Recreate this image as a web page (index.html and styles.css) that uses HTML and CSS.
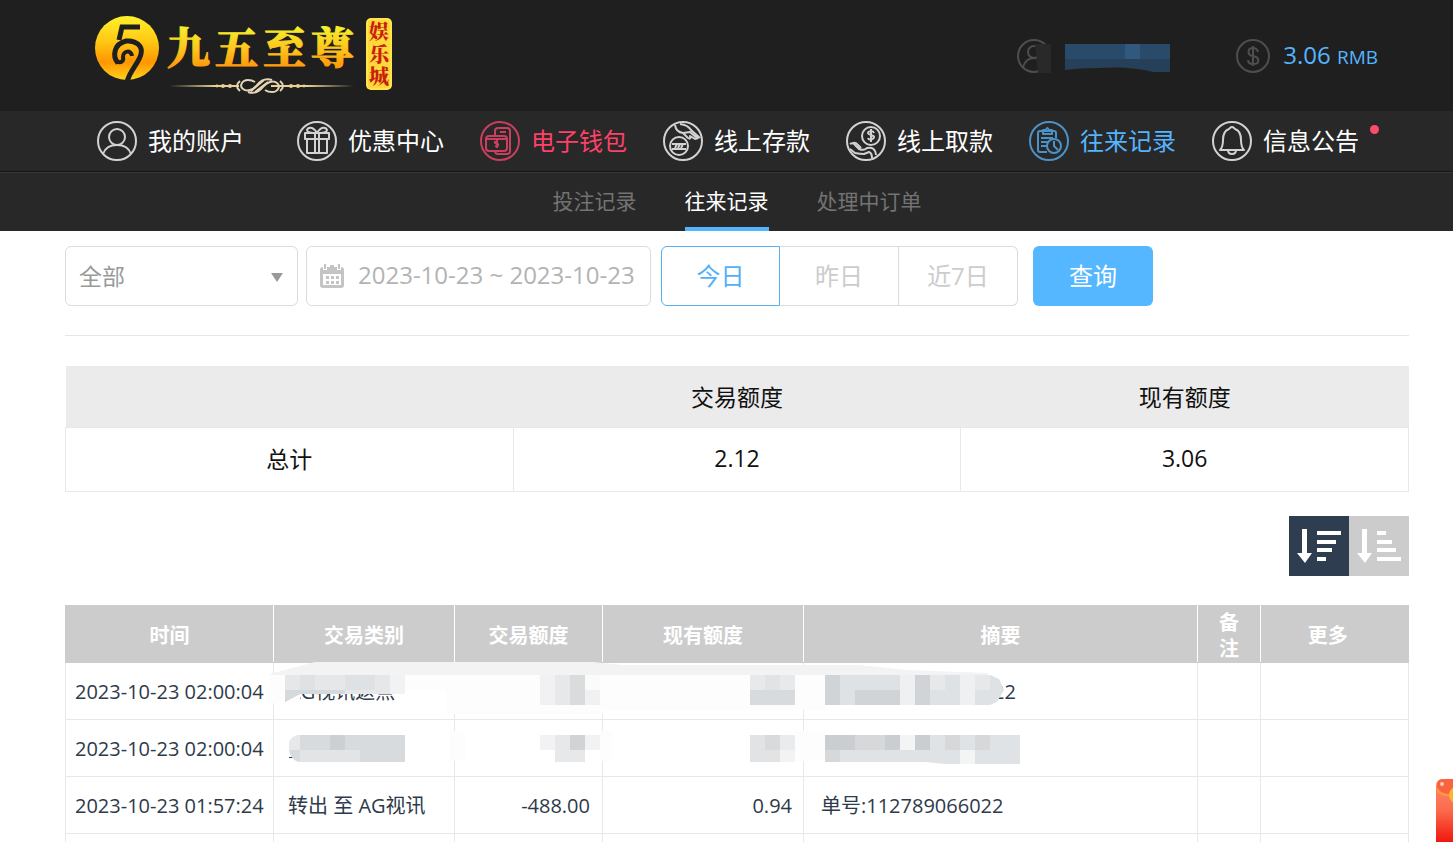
FILE: index.html
```html
<!DOCTYPE html>
<html lang="zh-CN">
<head>
<meta charset="utf-8">
<title>往来记录</title>
<link rel="stylesheet" href="styles.css">
</head>
<body>
<header class="top">
  <svg class="logo" viewBox="0 0 304 84" role="img" aria-label="九五至尊娱乐城">
    <defs>
      <linearGradient id="gold" x1="0" y1="0" x2="0" y2="1"><stop offset="0" stop-color="#fff22a"/><stop offset=".4" stop-color="#ffc814"/><stop offset=".72" stop-color="#ff9600"/><stop offset="1" stop-color="#ffd21e"/></linearGradient>
      <linearGradient id="goldText" gradientUnits="userSpaceOnUse" x1="0" y1="16" x2="0" y2="58"><stop offset="0" stop-color="#f4f02c"/><stop offset=".55" stop-color="#ffc21c"/><stop offset="1" stop-color="#ff9408"/></linearGradient>
      <linearGradient id="rule" gradientUnits="userSpaceOnUse" x1="76" y1="0" x2="261" y2="0"><stop offset="0" stop-color="#e8cf94" stop-opacity="0"/><stop offset=".25" stop-color="#e8cf94"/><stop offset=".75" stop-color="#e8cf94"/><stop offset="1" stop-color="#e8cf94" stop-opacity="0"/></linearGradient>
    </defs>
    <circle cx="34" cy="37" r="32" fill="url(#gold)"/>
    <g fill="none" stroke="#1f1f1f" stroke-width="5">
      <path d="M47 16H29L26 29"/>
      <path d="M25 52c-6-7-4-19 8-22 10-1 17 5 15 13-2 9-11 16-14 28"/>
      <path d="M23 50c5 3 8 0 7-4 0-6 8-8 9-1" stroke-width="4"/>
    </g>
    <g class="logo-name" fill="url(#goldText)" stroke="url(#goldText)" stroke-width="1"><text x="74 122 170 218" y="53">九五至尊</text></g>
    <path d="M76 74H146V76H76zM178 74H261V76H178z" fill="url(#rule)"/>
    <g fill="#e8cf94"><circle cx="130" cy="75" r="2"/><circle cx="137" cy="75" r="2"/><circle cx="205" cy="75" r="2"/><circle cx="198" cy="75" r="2"/><circle cx="124" cy="75" r="1.4"/><circle cx="211" cy="75" r="1.4"/></g>
    <g fill="none" stroke="#e4d6b4" stroke-width="2"><path d="M179 69c-6-2-11 0-15 5s-10 7-14 4-1-9 5-9q4 0 7 2"/><path d="M155 81c6 2 11 0 15-5s10-7 14-4 1 9-5 9q-4 0-7-2M158 80l13-11M162 81l13-10"/><path d="M147 70q-6 5 0 10M187 70q6 5 0 10"/></g>
    <rect x="273" y="7" width="26" height="72" rx="5" fill="#ffd83a"/><rect x="274" y="8" width="24" height="70" rx="4" fill="none" stroke="#fff05a"/>
    <g class="logo-tag" fill="#c81e10"><text x="276" y="28">娱</text><text x="276" y="51">乐</text><text x="276" y="73">城</text></g>
  </svg>
  <div class="account">
    <svg class="user-icon" viewBox="0 0 34 34" aria-hidden="true"><circle cx="17" cy="17" r="16"/><circle cx="17" cy="13" r="6"/><path d="M6 28q3-9 11-9t11 9"/><path class="smudge" d="M18 5h16v29H21z"/></svg>
    <svg class="user-name" viewBox="0 0 105 28" role="img" aria-label="用户名已隐藏"><path fill="#294a68" d="M0 0h105v15H0z"/><path fill="#31597d" d="M60 0h15v15H60z"/><path fill="#254058" d="M0 15h105v13H88q-22-6-55-4-18 0-33 2z"/></svg>
    <svg class="coin-icon" viewBox="0 0 34 34" aria-hidden="true"><circle cx="17" cy="17" r="16"/><path d="M17 7v20M22 13q-1-4-5-4c-6 0-6 7 0 8 7 1 7 8 0 8q-5 0-5-4"/></svg>
    <span class="balance">3.06 <small>RMB</small></span>
  </div>
</header>

<nav class="main-nav">
  <a class="nav-item first" href="#"><svg viewBox="0 0 40 40"><circle cx="20" cy="20" r="19"/><circle cx="20" cy="16" r="8"/><path d="M6 33q3-9 14-9t14 9"/></svg>我的账户</a>
  <a class="nav-item" href="#"><svg viewBox="0 0 40 40"><circle cx="20" cy="20" r="19"/><path d="M8 12h24v6H8zM10 18h20v14H10zM18 12v20M22 12v20M20 12c-4-7-9-6-10-3 0 2 4 3 10 3 6 0 10-1 10-3-1-3-6-4-10 3"/></svg>优惠中心</a>
  <a class="nav-item wallet" href="#"><svg viewBox="0 0 40 40"><circle cx="20" cy="20" r="19"/><path d="M15 15V10q0-3 3-3h9q3 0 3 3v20q0 3-3 3h-9q-3 0-3-3M20 11h6M9 15h15q3 0 3 3v9q0 3-3 3H9q-3 0-3-3v-9q0-3 3-3zM6 18h21M18 20q-4 0-3 2l3 1q1 3-3 2M17 19v8"/></svg>电子钱包</a>
  <a class="nav-item" href="#"><svg viewBox="0 0 40 40"><circle cx="20" cy="20" r="19"/><circle cx="16" cy="25" r="9"/><path d="M9 23h14M9 28h14M12 27l2-4M15 27l2-4M18 27l2-4"/><path d="M12 4q1 7 8 8l5 5q3 2 2-2l5 3q3 0 0-4l4 3M17 3q8 1 11 6l9 8M20 12l7-1 8 7"/></svg>线上存款</a>
  <a class="nav-item" href="#"><svg viewBox="0 0 40 40"><circle cx="20" cy="20" r="19"/><circle cx="25" cy="15" r="9"/><path d="M28 12c-1-3-6-2-6 0s6 2 6 4-5 4-6 1M25 8v13"/><path d="M4 23q3-2 5 1l4 4q5 2 8-1 8-2 9 7M7 22q3-1 5 2l3 3M4 28l5 4q5 1 9 1l5-2q3 1 3 6"/></svg>线上取款</a>
  <a class="nav-item active" href="#"><svg viewBox="0 0 40 40"><circle cx="20" cy="20" r="19"/><path d="M18 31H11q-2 0-2-2V12q0-2 2-2h14q2 0 2 2v5M14 13V9h3q1-4 3 0h3v4zM12 17h12M12 21h7M12 25h6"/><circle cx="25" cy="25" r="7"/><path d="M25 20v5l4 4"/></svg>往来记录</a>
  <a class="nav-item" href="#"><svg viewBox="0 0 40 40"><circle cx="20" cy="20" r="19"/><path d="M8 29q3-3 3-10c0-7 3-10 6-11q3-4 6 0c3 1 6 4 6 11q0 7 3 10zM16 29q0 4 4 4t4-4"/></svg>信息公告<i class="dot"></i></a>
</nav>

<nav class="sub-nav">
  <a href="#">投注记录</a>
  <a class="current" href="#">往来记录</a>
  <a href="#">处理中订单</a>
</nav>

<main class="content">
  <form class="filters">
    <div class="select-box">
      <select aria-label="类别"><option>全部</option></select>
      <svg viewBox="0 0 12 9" aria-hidden="true"><path d="M0 0h12L6 9z"/></svg>
    </div>
    <label class="date-box">
      <svg viewBox="0 0 24 24" aria-hidden="true"><path fill="#c4c4c4" d="M3 3h18q3 0 3 3v15q0 3-3 3H3q-3 0-3-3V6q0-3 3-3z"/><path fill="#fff" d="M3 10h18v11H3zM3 0h4v6H3zM17 0h4v6h-4z"/><path fill="#c4c4c4" d="M4 0h2v5H4zM18 0h2v5h-2zM10 1h4v3h-4zM6 12h3v3H6zM11 12h3v3h-3zM16 12h3v3h-3zM6 17h3v3H6zM11 17h3v3h-3zM16 17h3v3h-3z"/></svg>
      <input type="text" aria-label="日期" value="2023-10-23 ~ 2023-10-23">
    </label>
    <div class="range">
      <button type="button" class="on">今日</button><button type="button">昨日</button><button type="button">近7日</button>
    </div>
    <button type="submit" class="query">查询</button>
  </form>

  <table class="summary">
    <thead><tr><th></th><th>交易额度</th><th>现有额度</th></tr></thead>
    <tbody><tr><td>总计</td><td>2.12</td><td>3.06</td></tr></tbody>
  </table>

  <div class="sort">
    <button type="button" class="desc" aria-label="降序"><svg viewBox="0 0 60 60"><path d="M13 13h5v24h5l-7 10-8-10h5zM28 15h24v4H28zM28 24h19v4H28zM28 32h15v4H28zM28 41h9v4h-9z"/></svg></button>
    <button type="button" class="asc" aria-label="升序"><svg viewBox="0 0 60 60"><path d="M13 13h5v24h5l-7 10-8-10h5zM28 15h9v4h-9zM28 24h15v4H28zM28 32h19v4H28zM28 41h24v4H28z"/></svg></button>
  </div>

  <div class="records-wrap">
    <table class="records">
      <colgroup><col class="c-time"><col class="c-type"><col class="c-amount"><col class="c-left"><col class="c-note"><col class="c-remark"><col class="c-more"></colgroup>
      <thead><tr><th>时间</th><th>交易类别</th><th>交易额度</th><th>现有额度</th><th>摘要</th><th>备注</th><th>更多</th></tr></thead>
      <tbody>
        <tr><td>2023-10-23 02:00:04</td><td>AG视讯返点</td><td></td><td></td><td><span class="hidden-no"></span>22</td><td></td><td></td></tr>
        <tr><td>2023-10-23 02:00:04</td><td></td><td></td><td></td><td></td><td></td><td></td></tr>
        <tr><td>2023-10-23 01:57:24</td><td>转出 至 AG视讯</td><td>-488.00</td><td>0.94</td><td>单号:112789066022</td><td></td><td></td></tr>
        <tr><td></td><td></td><td></td><td></td><td></td><td></td><td></td></tr>
      </tbody>
    </table>
    <svg class="mask" viewBox="265 660 760 106" aria-hidden="true">
      <path fill="#fdfdfd" d="M270 675h725v15H405v4H300v8h-15l-15 2zM446 688h157v26H446zM603 675h222v35H603zM450 731h15v30h-15zM600 731h12v30h-12zM795 731h30v30h-30z"/>
      <path fill="#f3f3f3" d="M270 674l45-12h278l30 3h235l50 5 80 3v2H270z"/>
      <path fill="#e6e7e9" d="M285 675h105v19h-90l-8 4-7 4z"/><path fill="#f1f2f3" d="M390 675h15v19h-15z"/>
      <path fill="#d6d9db" d="M285 690h60v4h-45l-15 8z"/><path fill="#dfe2e4" d="M300 675h15v15h-15zM345 675h30v15h-30z"/>
      <path fill="#f1f1f3" d="M540 675h60v30h-60z"/><path fill="#e7e8ea" d="M555 675h15v30h-15z"/><path fill="#d9dbdd" d="M570 675h15v30h-15z"/><path fill="#fbfbfb" d="M585 675h15v15h-15z"/>
      <path fill="#e8e9eb" d="M750 675h45v15h-45z"/><path fill="#d8dbde" d="M750 690h45v15h-45z"/><path fill="#e1e3e5" d="M765 675h15v15h-15z"/>
      <path fill="#dfe2e4" d="M825 675h165l9 4 5 11-7 12-7 3H825z"/><path fill="#d1d4d6" d="M825 675h15v30h-15zM855 690h45v15h-45zM915 675h15v30h-15z"/><path fill="#eff0f1" d="M900 675h15v30h-15zM960 675h15v30h-15z"/><path fill="#e7e8ea" d="M930 675h15v15h-15zM975 675h15v15h-15z"/>
      <path fill="#33404f" d="M289 757h5v1h-5z"/>
      <path fill="#d8dbde" d="M298 735h107v27H300q-7-1-10-8-4-12 8-19z"/><path fill="#cccfd3" d="M330 735h15v15h-15z"/><path fill="#e2e4e6" d="M300 750h60v12h-60z"/><path fill="#e7e8ea" d="M289 742q3-7 11-7v15h-11z"/>
      <path fill="#f2f2f5" d="M540 735h60v15h-60z"/><path fill="#e7e8ea" d="M555 735h30v27h-30z"/><path fill="#d1d3d6" d="M570 735h15v15h-15z"/>
      <path fill="#e1e3e5" d="M750 735h30v27h-30z"/><path fill="#eaebed" d="M780 735h15v15h-15z"/><path fill="#f3f3f4" d="M780 750h15v12h-15z"/><path fill="#d8dadc" d="M765 735h15v15h-15z"/>
      <path fill="#e0e3e5" d="M825 735h195v29h-75l-20-2H825z"/><path fill="#cbced1" d="M825 735h30v15h-30zM885 735h15v15h-15zM915 735h15v15h-15z"/><path fill="#d6d8da" d="M855 735h30v15h-30zM945 735h15v15h-15zM975 735h15v15h-15zM825 750h15v12h-15z"/><path fill="#f3f4f4" d="M900 735h15v15h-15zM960 750h15v14h-15z"/>
    </svg>
  </div>
</main>

<a class="packet" href="#" aria-label="红包"><svg viewBox="0 0 17 64"><defs><linearGradient id="red" x1="0" y1="0" x2="0" y2="1"><stop offset="0" stop-color="#ff8b6b"/><stop offset=".5" stop-color="#fb6a4c"/><stop offset="1" stop-color="#f0180c"/></linearGradient></defs><path fill="url(#red)" d="M0 8q0-7 7-7h10v63H0z"/><path fill="#f9633f" d="M1 8q0-7 6-7h10v15Q3 17 1 8z"/><path d="M1 11q3 7 16 6" fill="none" stroke="#ff9a3c" stroke-width="2"/><circle cx="6" cy="6" r="2" fill="#ffc9b5"/><circle cx="22" cy="17" r="9" fill="#fbb734"/></svg></a>
</body>
</html>
```
FILE: styles.css
```css
* { box-sizing: border-box; }
html { scrollbar-width: none; }
body {
  margin: 0;
  background: #fff;
  color: #111;
  font-family: "Open Sans", "Noto Sans CJK SC", sans-serif;
}
a { text-decoration: none; color: inherit; }
button, select, input { font: inherit; margin: 0; }
button { cursor: pointer; }
svg { display: block; flex: none; }

.top {
  display: flex;
  justify-content: space-between;
  height: 111px;
  padding: 11px 75px 16px 93px;
  background: #1f1f1f;
}
.logo { width: 304px; height: 84px; }
.logo-name { font: 900 43px "Noto Serif CJK SC", "Noto Sans CJK SC", serif; }
.logo-tag { font: 900 20px "Noto Serif CJK SC", "Noto Sans CJK SC", serif; }
.account { display: flex; align-items: center; height: 90px; color: #54b5ff; }
.user-icon, .coin-icon {
  width: 34px;
  height: 34px;
  fill: none;
  stroke: #4e4e4e;
  stroke-width: 2;
}
.user-icon .smudge { fill: #292929; stroke: none; }
.user-name { width: 105px; height: 28px; margin: 4px 66px 0 14px; }
.balance { margin-left: 13px; font-size: 24px; line-height: 32px; }
.balance small { font-size: 19px; }

.main-nav {
  display: flex;
  gap: 36px;
  height: 61px;
  padding-left: 97px;
  background: #282828;
  border-bottom: 1px solid #151515;
}
.nav-item {
  display: flex;
  align-items: center;
  gap: 11px;
  color: #fff;
  font-size: 24px;
  line-height: 60px;
  white-space: nowrap;
}
.nav-item svg {
  width: 40px;
  height: 40px;
  fill: none;
  stroke: #d2d2d2;
  stroke-width: 2;
  stroke-linejoin: round;
}
.nav-item.first { margin-right: 17px; }
.nav-item.wallet { color: #ff4169; }
.nav-item.wallet svg { stroke: #c93f5d; }
.nav-item.active { color: #54b5ff; }
.nav-item.active svg { stroke: #4a92c8; }
.dot {
  align-self: flex-start;
  width: 9px;
  height: 9px;
  margin-top: 14px;
  border-radius: 50%;
  background: #ff4a70;
}

.sub-nav {
  display: flex;
  justify-content: center;
  gap: 48px;
  height: 59px;
  padding: 0 44px 0 65px;
  background: #282828;
  border-top: 1px solid #383838;
  color: #737373;
  font-size: 21px;
  line-height: 56px;
}
.sub-nav .current { color: #fff; border-bottom: 4px solid #54b5ff; }

.content { padding: 15px 44px 0 65px; }
.filters {
  display: flex;
  height: 90px;
  border-bottom: 1px solid #e6e6e6;
  font-size: 24px;
}
.select-box { position: relative; width: 233px; height: 60px; margin-right: 8px; }
.select-box select {
  width: 100%;
  height: 60px;
  padding: 0 13px;
  appearance: none;
  border: 1px solid #dcdcdc;
  border-radius: 6px;
  background: #fff;
  color: #999;
  font-size: 23px;
}
.select-box svg {
  position: absolute;
  top: 27px;
  right: 15px;
  width: 12px;
  height: 9px;
  fill: #999;
  pointer-events: none;
}
.date-box {
  display: flex;
  align-items: center;
  gap: 14px;
  width: 345px;
  height: 60px;
  margin-right: 10px;
  padding: 0 8px 0 13px;
  border: 1px solid #dcdcdc;
  border-radius: 6px;
}
.date-box svg { width: 24px; height: 24px; }
.date-box input {
  flex: 1;
  min-width: 0;
  padding: 0 0 3px;
  border: 0;
  background: none;
  color: #b3b3b3;
}
.range { display: flex; height: 60px; margin-right: 15px; }
.range button {
  width: 119px;
  padding: 0 0 3px;
  border: 1px solid #dcdcdc;
  border-left: 0;
  background: #fff;
  color: #ccc;
}
.range .on { border: 1px solid #54b0f0; border-radius: 6px 0 0 6px; color: #54b0f8; }
.range button:last-child { border-radius: 0 6px 6px 0; }
.query {
  width: 120px;
  height: 60px;
  padding: 0 0 3px;
  border: 0;
  border-radius: 6px;
  background: #54b7ff;
  color: #fff;
}

table { width: 100%; border-collapse: collapse; table-layout: fixed; }
.summary { margin-top: 30px; font-size: 23px; text-align: center; }
.summary th { height: 61px; padding: 0; background: #ebebeb; font-weight: 400; }
.summary td { height: 64px; padding: 0 0 2px; border: 1px solid #e8e8e8; }

.sort { display: flex; justify-content: flex-end; margin-top: 24px; }
.sort button { width: 60px; height: 60px; padding: 0; border: 0; }
.sort svg { fill: #fff; }
.sort .desc { background: #2e3d50; }
.sort .asc { background: #ccc; }

.records-wrap { position: relative; margin-top: 29px; }
.records { color: #2e3a49; font-size: 20px; line-height: 26px; }
.records th {
  height: 58px;
  padding: 5px 20px 0;
  border-left: 1px solid #fff;
  border-bottom: 1px solid #ccc;
  background: #ccc;
  color: #fff;
  font-weight: 700;
}
.records th:first-child { border-left-color: #ccc; }
.records th:last-child { padding-right: 34px; }
.records td { height: 57px; padding: 2px 0 0; border: 1px solid #e8e8e8; white-space: nowrap; }
.records tbody tr:first-child td { border-top-color: #ccc; }
.records td:nth-child(1) { padding-left: 9px; }
.records td:nth-child(2) { padding-left: 14px; }
.records td:nth-child(3) { padding-right: 12px; text-align: right; }
.records td:nth-child(4) { padding-right: 11px; text-align: right; }
.records td:nth-child(5) { padding-left: 17px; }
.c-time { width: 208px; }
.c-type { width: 181px; }
.c-amount { width: 148px; }
.c-left { width: 201px; }
.c-remark { width: 63px; }
.c-more { width: 148px; }
.hidden-no { display: inline-block; width: 172px; }
.mask { position: absolute; top: 55px; left: 200px; width: 760px; height: 106px; }

.packet { position: fixed; right: 0; bottom: 0; }
.packet svg { width: 17px; height: 64px; }
```
